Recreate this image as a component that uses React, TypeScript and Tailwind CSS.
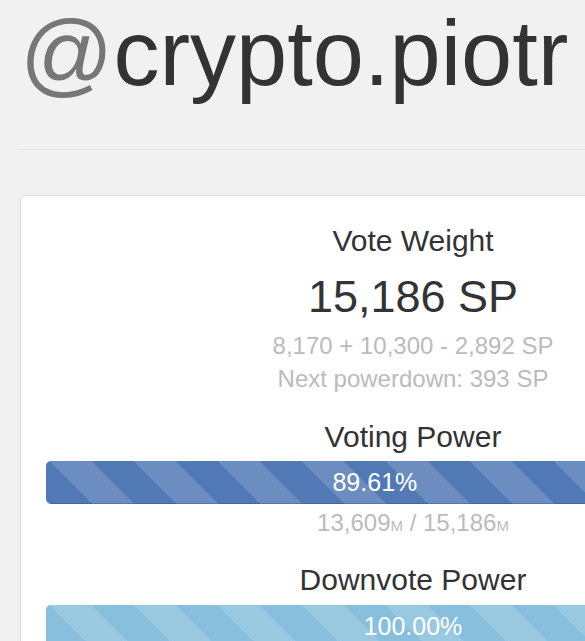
function Bar({ value, label, color }: { value: number; label: string; color: string }) {
  return (
    <div className="h-[43px] w-full overflow-hidden rounded-[5px] bg-[#f5f5f5] shadow-[inset_0_1px_2px_rgba(0,0,0,0.1)]">
      <div
        className={`h-full bg-[linear-gradient(45deg,rgba(255,255,255,.15)_25%,transparent_25%,transparent_50%,rgba(255,255,255,.15)_50%,rgba(255,255,255,.15)_75%,transparent_75%,transparent)] bg-[length:84px_84px] bg-[position:4px_0] text-center text-[25px] leading-[43px] text-white shadow-[inset_0_-1px_0_rgba(0,0,0,0.15)] ${color}`}
        style={{ width: `${value}%` }}
      >
        {label}
      </div>
    </div>
  );
}

export default function App() {
  return (
    <div className="h-screen w-full overflow-hidden bg-[#f1f1f1] font-['Liberation_Sans',Arial,sans-serif]">
      <div className="w-[826px] px-5 pt-[3px]">
        <h1 className="whitespace-nowrap text-[92px] leading-[100px] text-[#333]">
          <span className="text-[#777]">@</span>crypto.piotr
        </h1>
        <hr className="mt-[46px] border-0 border-t border-[#e6e6e6]" />

        {/* Panel */}
        <div className="mt-[45px] rounded-[5px] border border-[#dcdcdc] bg-white px-[25px] pt-[28px] pb-10 text-center shadow-[0_1px_2px_rgba(0,0,0,0.05)]">
          <h3 className="text-[30px] leading-[33px] text-[#333]">Vote Weight</h3>
          <div className="mt-[15px] text-[45px] leading-[50px] text-[#333]">15,186 SP</div>
          <div className="mt-[7px] text-[24px] leading-[33px] text-[#bbb]">
            <div>8,170 + 10,300 - 2,892 SP</div>
            <div>Next powerdown: 393 SP</div>
          </div>

          <h3 className="mt-[25px] text-[30px] leading-[33px] text-[#333]">Voting Power</h3>
          <div className="mt-2">
            <Bar value={89.61} label="89.61%" color="bg-[#5179b5]" />
          </div>
          <div className="mt-[2px] text-[24px] leading-[33px] text-[#bbb]">
            13,609<span className="text-[15px]">M</span> / 15,186<span className="text-[15px]">M</span>
          </div>

          <h3 className="mt-[21px] text-[30px] leading-[33px] text-[#333]">Downvote Power</h3>
          <div className="mt-[9px]">
            <Bar value={100} label="100.00%" color="bg-[#87bfdc]" />
          </div>
        </div>
      </div>
    </div>
  );
}
